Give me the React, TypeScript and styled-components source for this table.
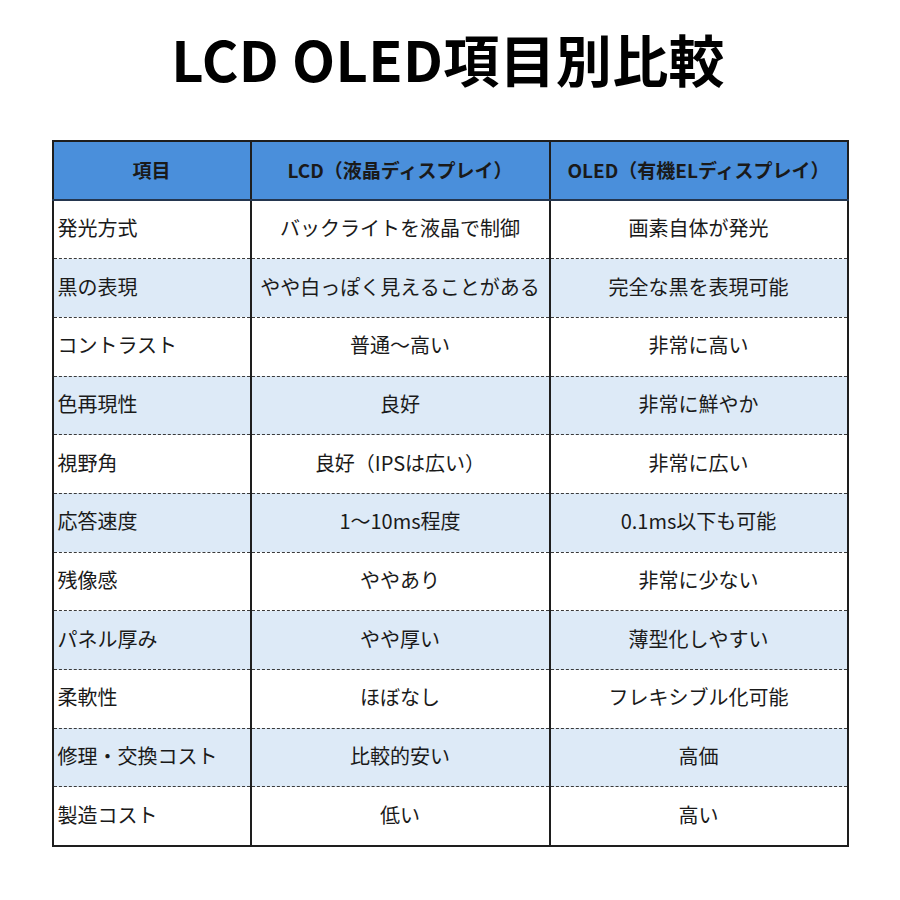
import React from "react";
import styled, { createGlobalStyle } from "styled-components";

const Global = createGlobalStyle`
  html, body { margin: 0; padding: 0; background: #ffffff; }
  body { font-family: "Noto Sans CJK JP", "Noto Sans", sans-serif; color: #1a1a1a; }
`;

const Page = styled.div`
  width: 900px;
  height: 900px;
  display: flex;
  flex-direction: column;
  align-items: center;
  box-sizing: border-box;
`;

const Title = styled.h1`
  margin: 22px 0 0 -4px;
  height: 72px;
  font-size: 56px;
  line-height: 72px;
  font-weight: 700;
  color: #000;
  letter-spacing: 0.3px;
  font-family: "Noto Sans CJK JP", "Noto Sans", sans-serif;
`;

const Table = styled.table`
  margin-top: 46px;
  width: 795px;
  border-collapse: collapse;
  table-layout: fixed;
  border: 2px solid #1e1e1e;
`;

const HeadCell = styled.th`
  height: 54.5px;
  background: #4a8fdb;
  color: #1a1a1a;
  font-size: 19px;
  font-weight: 700;
  text-align: center;
  padding: 0 0 2px 0;
  border-left: 2px solid #1e1e1e;
  border-bottom: 2px solid #24364f;
  white-space: nowrap;
`;

const Row = styled.tr<{ $alt: boolean }>`
  background: ${(p) => (p.$alt ? "#ddeaf7" : "#ffffff")};
`;

const Cell = styled.td<{ $left?: boolean; $last?: boolean }>`
  height: 53.7px;
  padding: 0 0 4px ${(p) => (p.$left ? "4px" : "0")};
  font-size: 20px;
  font-weight: 400;
  color: #1a1a1a;
  text-align: ${(p) => (p.$left ? "left" : "center")};
  border-left: 2px solid #1e1e1e;
  border-bottom: ${(p) => (p.$last ? "none" : "1px dashed #3a3a3a")};
  white-space: nowrap;
`;

const rows: [string, string, string][] = [
  ["発光方式", "バックライトを液晶で制御", "画素自体が発光"],
  ["黒の表現", "やや白っぽく見えることがある", "完全な黒を表現可能"],
  ["コントラスト", "普通～高い", "非常に高い"],
  ["色再現性", "良好", "非常に鮮やか"],
  ["視野角", "良好（IPSは広い）", "非常に広い"],
  ["応答速度", "1～10ms程度", "0.1ms以下も可能"],
  ["残像感", "ややあり", "非常に少ない"],
  ["パネル厚み", "やや厚い", "薄型化しやすい"],
  ["柔軟性", "ほぼなし", "フレキシブル化可能"],
  ["修理・交換コスト", "比較的安い", "高価"],
  ["製造コスト", "低い", "高い"],
];

export default function App() {
  return (
    <Page>
      <Global />
      <Title>LCD OLED項目別比較</Title>
      <Table>
        <colgroup>
          <col style={{ width: 198 }} />
          <col style={{ width: 299 }} />
          <col style={{ width: 298 }} />
        </colgroup>
        <thead>
          <tr>
            <HeadCell>項目</HeadCell>
            <HeadCell>LCD（液晶ディスプレイ）</HeadCell>
            <HeadCell>OLED（有機ELディスプレイ）</HeadCell>
          </tr>
        </thead>
        <tbody>
          {rows.map((r, i) => {
            const last = i === rows.length - 1;
            return (
              <Row key={i} $alt={i % 2 === 1}>
                <Cell $left $last={last}>{r[0]}</Cell>
                <Cell $last={last}>{r[1]}</Cell>
                <Cell $last={last}>{r[2]}</Cell>
              </Row>
            );
          })}
        </tbody>
      </Table>
    </Page>
  );
}
